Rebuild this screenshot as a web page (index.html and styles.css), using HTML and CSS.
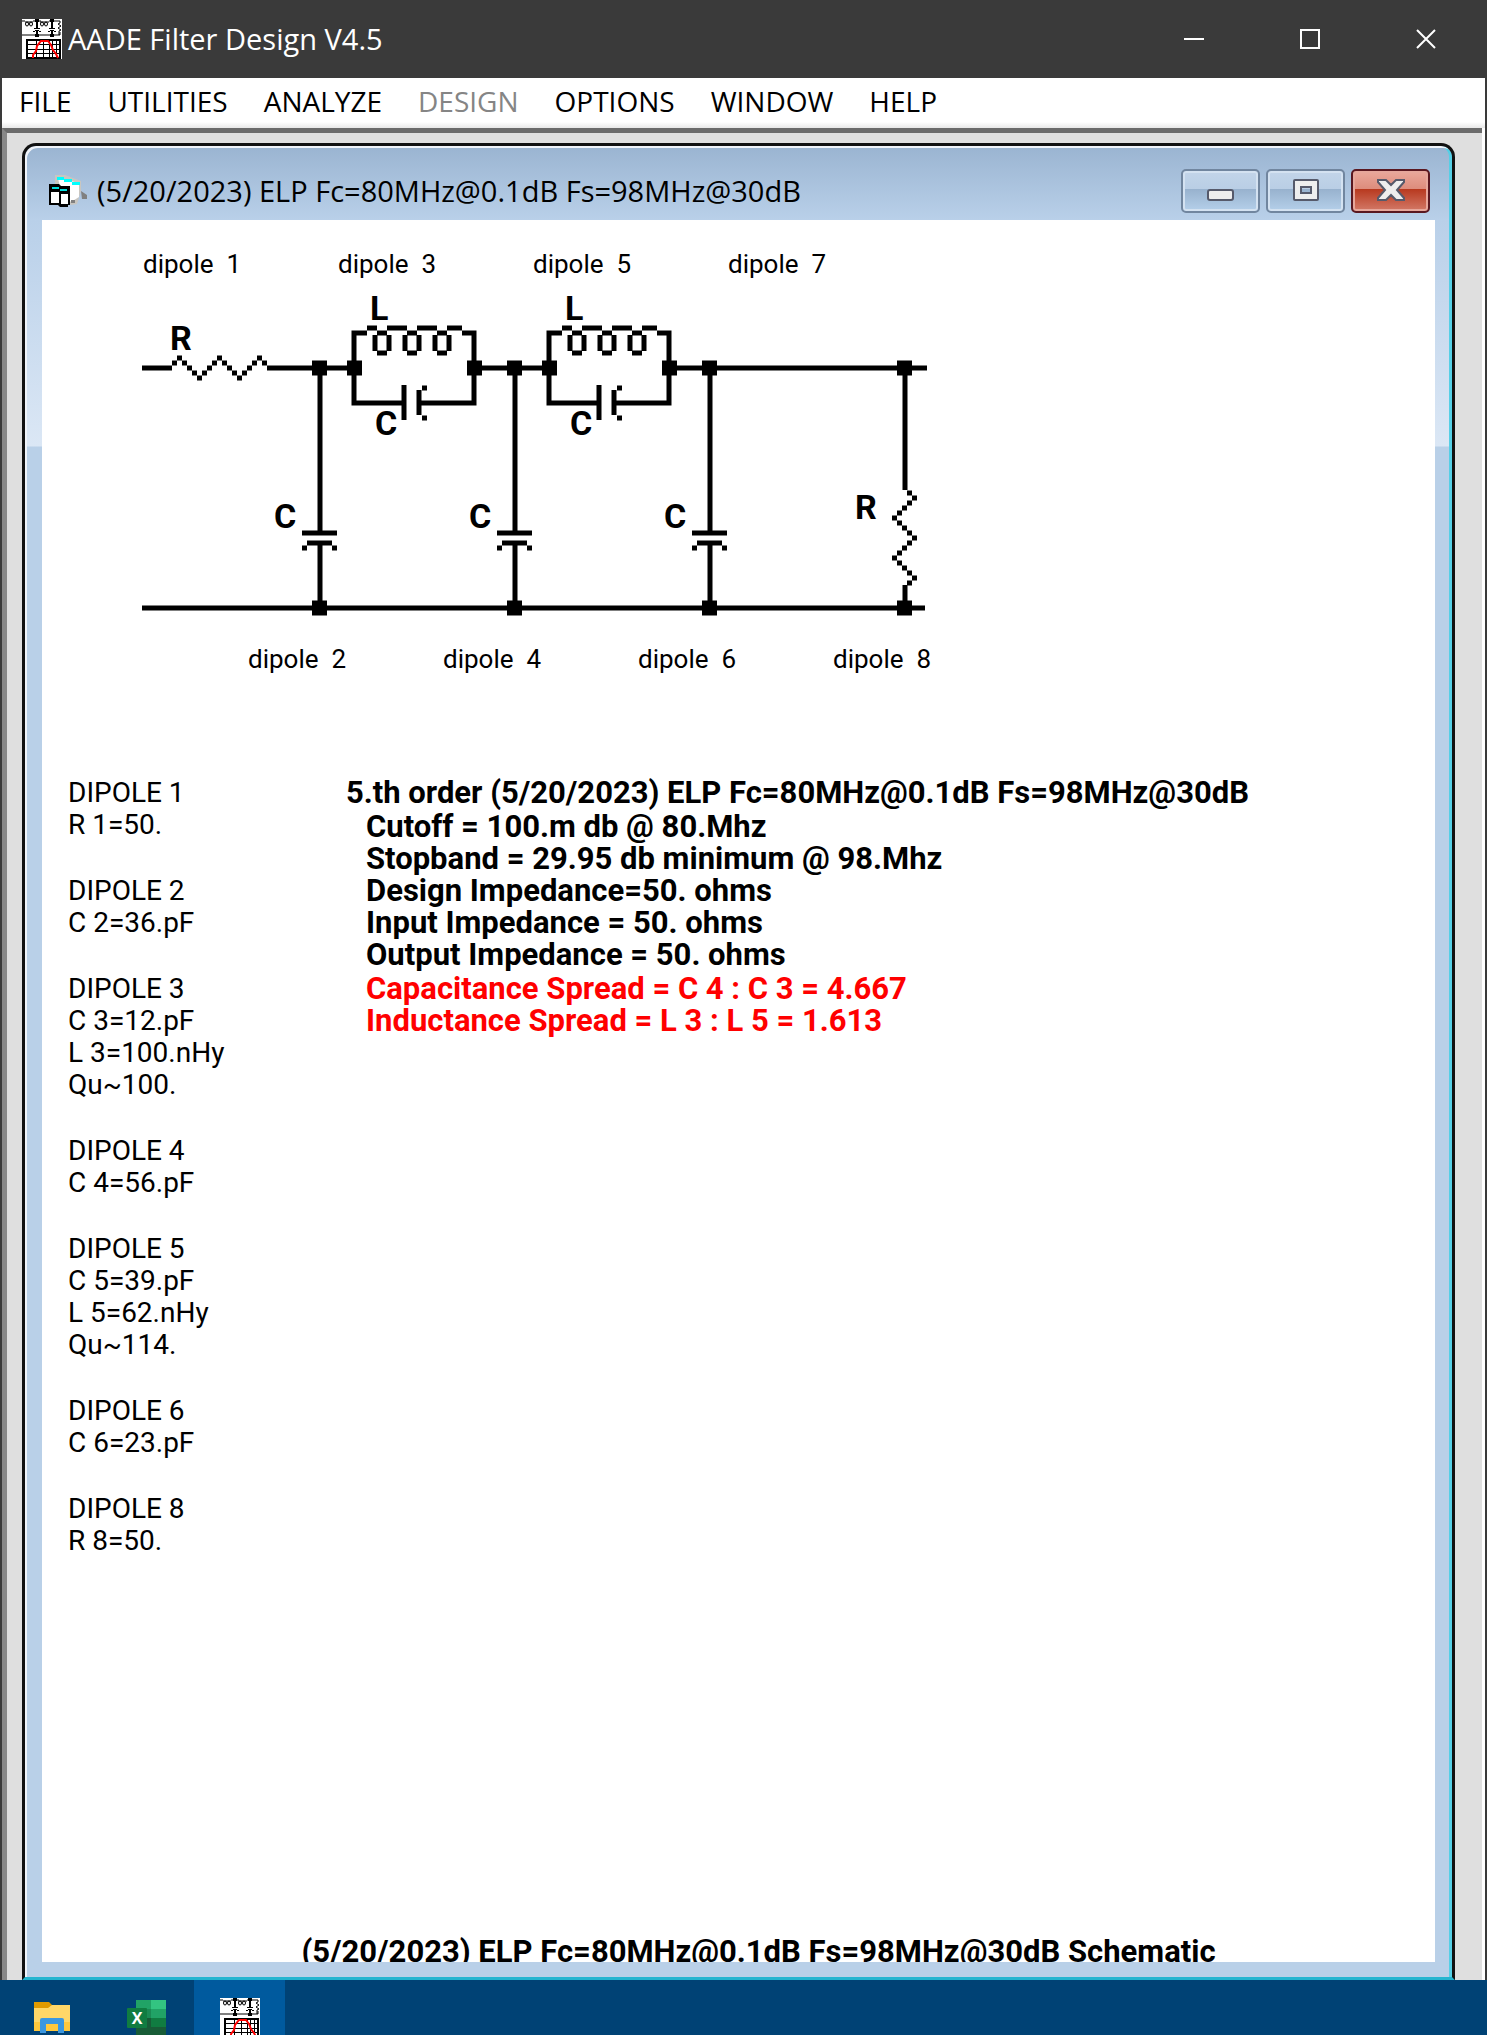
FILE: index.html
```html
<!DOCTYPE html>
<html lang="en">
<head>
<meta charset="utf-8">
<meta name="viewport" content="width=device-width, initial-scale=1">
<title>AADE Filter Design V4.5</title>
<link rel="stylesheet" href="styles.css">
</head>
<body>
<svg class="defs" aria-hidden="true">
  <symbol id="app-icon" viewBox="0 0 40 40">
    <path fill="#fff" d="M0 0h40v40H0z"/>
    <g fill="none" stroke="#000">
      <path d="M0 2h3M11 2h8M27 2h11v2l-2 1 3 2-3 2 3 2-2 1v4M0 16h38v-3M3 3h8M18 3h9"/>
      <ellipse cx="5" cy="5" rx="1.500" ry="2"/>
      <ellipse cx="9" cy="5" rx="1.500" ry="2"/>
      <ellipse cx="20" cy="5" rx="1.500" ry="2"/>
      <ellipse cx="24" cy="5" rx="1.500" ry="2"/>
    </g>
    <path fill="#000" d="M13 0h4v3h-4zM28 0h4v3h-4zM13 15h4v3h-4zM28 15h4v3h-4zM14 3h2v6h-2zM29 3h2v6h-2zM12 9h6v1h-6zM27 9h6v1h-6zM13 11h4v1h-4zM28 11h4v1h-4zM11 12h2v1h-2zM17 12h2v1h-2zM26 12h2v1h-2zM32 12h2v1h-2zM14 12h2v3h-2zM29 12h2v3h-2z"/>
    <path fill="none" stroke="#000" stroke-width="2" d="M5 21h33v18H5z"/>
    <path fill="none" stroke="#000" d="M5 25.500h33M5 30.500h33M5 34.500h33M14.500 21v18M21.500 21v18M27.500 21v18M30.500 21v18M34.500 21v18"/>
    <path fill="none" stroke="#f00" stroke-width="2" d="M11 39v-3l3-4 1-5 4-5h7l3 4 2 5 3 4 2 4"/>
  </symbol>
</svg>

<header class="titlebar">
  <svg class="app-icon" aria-hidden="true"><use href="#app-icon"/></svg>
  <h1 class="titlebar-text">AADE Filter Design V4.5</h1>
  <div class="window-controls">
    <button class="window-control" aria-label="Minimize"><svg viewBox="0 0 20 20"><path d="M0 10h20"/></svg></button>
    <button class="window-control" aria-label="Maximize"><svg viewBox="0 0 20 20"><path d="M1 1h18v18H1z"/></svg></button>
    <button class="window-control" aria-label="Close"><svg viewBox="0 0 20 20"><path d="M1 1l18 18M19 1L1 19"/></svg></button>
  </div>
</header>

<main class="frame">
  <nav class="menubar">
    <button class="menu">FILE</button>
    <button class="menu">UTILITIES</button>
    <button class="menu">ANALYZE</button>
    <button class="menu" disabled>DESIGN</button>
    <button class="menu">OPTIONS</button>
    <button class="menu">WINDOW</button>
    <button class="menu">HELP</button>
  </nav>

  <div class="workspace">
    <section class="child">
      <header class="child-bar">
        <svg class="child-icon" viewBox="0 0 38 32" aria-hidden="true">
          <path fill="#c9c6c0" d="M6 0h10l16 6v10l-4 13-6 1-16-18z"/>
          <path fill="#fff" d="M9 3l21 5v14l-8 5-10-10z"/>
          <path fill="#0ff" d="M8 2h7v3H8zM15 4h8v3h-8zM23 7h8v3h-8z"/>
          <path fill="#808080" d="M32 16l6 4v4h-5zM22 25h4v3h-4z"/>
          <path fill="#000" d="M0 9h10l2 2h9v19h-2v2h-8l-2-2H0z"/>
          <path fill="#0dd" d="M3 12h7v2H3zM11 14h7v2h-7z"/>
          <path fill="#fff" d="M2 17h8v11H2zM12 19h7v10h-7z"/>
        </svg>
        <h2 class="child-title">(5/20/2023) ELP Fc=80MHz@0.1dB Fs=98MHz@30dB</h2>
        <div class="child-controls">
          <button class="child-control" aria-label="Minimize"><svg viewBox="0 0 28 24"><rect x="1" y="11" width="25" height="10" rx="2"/></svg></button>
          <button class="child-control" aria-label="Maximize"><svg viewBox="0 0 28 24"><path fill-rule="evenodd" d="M3 1h22q1 0 1 1v18q0 1-1 1H3q-1 0-1-1V2q0-1 1-1zM9 8v6h10V8z"/></svg></button>
          <button class="child-control child-close" aria-label="Close"><svg viewBox="0 0 28 24"><path d="M1 1h8l5 5 5-5h8v2l-7 8 7 8v2h-8l-5-5-5 5H1v-2l7-8-7-8z"/></svg></button>
        </div>
      </header>

      <div class="document">
        <svg class="schematic" viewBox="42 220 950 480" role="img" aria-label="Filter schematic">
          <defs>
            <g id="tank">
              <path d="M367 333H354v70h50M372 328h-5M404 385v35M419 390v25M419 403h55v-70h-12M367 328h10M387 328h20M417 328h20M447 328h15M422 388h5M422 418h5"/>
              <path d="M377 333h10M375 335v16M389 335v16M377 353h10M407 333h10M405 335v16M419 335v16M407 353h10M437 333h10M435 335v16M449 335v16M437 353h10"/>
              <path class="node" d="M347 368h15M467 368h15"/>
              <text class="part" x="370" y="320">L</text>
              <text class="part" x="375" y="435">C</text>
            </g>
            <g id="shunt">
              <path d="M320 368v165M302 533h35M307 543h25M302 548h5M332 548h5M320 543v65"/>
              <path class="node" d="M312 368h15M312 608h15"/>
              <text class="part" x="274" y="528">C</text>
            </g>
          </defs>
          <g class="wires">
            <path d="M142 368h30M172 363h5m0-5h5m0 5h5m0 5h5m0 5h5m0 5h5m0-5h5m0-5h5m0-5h5m0-5h5m0 5h5m0 5h5m0 5h5m0 5h5m0-5h5m0-5h5m0-5h5m0-5h5m0 5h5"/>
            <path d="M267 368h87M474 368h76M670 368h257M142 608h783"/>
            <path d="M905 368v122M907 493h5m0 5h5m-10 5h5m-10 5h5m-10 5h5m-10 5h5m0 5h5m0 5h5m0 5h5m0 5h5m-10 5h5m-10 5h5m-10 5h5m-10 5h5m0 5h5m0 5h5m0 5h5m0 5h5m-10 5h5M905 585v23"/>
            <path class="node" d="M897 368h15M897 608h15"/>
            <use href="#tank"/>
            <use href="#tank" x="195"/>
            <use href="#shunt"/>
            <use href="#shunt" x="195"/>
            <use href="#shunt" x="390"/>
          </g>
          <text class="part" x="170" y="350">R</text>
          <text class="part" x="855" y="519">R</text>
          <g class="labels">
            <text x="143" y="273">dipole  1</text>
            <text x="338" y="273">dipole  3</text>
            <text x="533" y="273">dipole  5</text>
            <text x="728" y="273">dipole  7</text>
            <text x="248" y="668">dipole  2</text>
            <text x="443" y="668">dipole  4</text>
            <text x="638" y="668">dipole  6</text>
            <text x="833" y="668">dipole  8</text>
          </g>
        </svg>

        <div class="report">
          <div class="parts">
            <p>DIPOLE 1<br>R 1=50.</p>
            <p>DIPOLE 2<br>C 2=36.pF</p>
            <p>DIPOLE 3<br>C 3=12.pF<br>L 3=100.nHy<br>Qu~100.</p>
            <p>DIPOLE 4<br>C 4=56.pF</p>
            <p>DIPOLE 5<br>C 5=39.pF<br>L 5=62.nHy<br>Qu~114.</p>
            <p>DIPOLE 6<br>C 6=23.pF</p>
            <p>DIPOLE 8<br>R 8=50.</p>
          </div>
          <div class="summary">
            <p>5.th order (5/20/2023) ELP Fc=80MHz@0.1dB Fs=98MHz@30dB</p>
            <p class="detail">Cutoff = 100.m db @ 80.Mhz<br>Stopband = 29.95 db minimum @ 98.Mhz<br>Design Impedance=50. ohms<br>Input Impedance = 50. ohms<br>Output Impedance = 50. ohms</p>
            <p class="detail spread">Capacitance Spread = C 4 : C 3 = 4.667<br>Inductance Spread = L 3 : L 5 = 1.613</p>
          </div>
        </div>

        <p class="caption">(5/20/2023) ELP Fc=80MHz@0.1dB Fs=98MHz@30dB Schematic</p>
      </div>
    </section>
  </div>
</main>

<footer class="taskbar">
  <button class="task" aria-label="File Explorer">
    <svg class="task-icon" viewBox="0 0 40 40">
      <path fill="#e09a00" d="M2 4h15l3 3v4H2z"/>
      <path fill="#ffd768" d="M2 10h14l4-3h18v26H2z"/>
      <path fill="#ffc83d" d="M2 24h36v9H2z"/>
      <path fill="#3b97e0" d="M8 35V22q0-2 2-2h20q2 0 2 2v13h-6v-9H14v9z"/>
    </svg>
  </button>
  <button class="task" aria-label="Excel">
    <svg class="task-icon" viewBox="0 0 40 40">
      <path fill="#21a366" d="M10 2h15v9H10zM25 11h15v9H25z"/>
      <path fill="#33c481" d="M25 2h15v9H25z"/>
      <path fill="#1b8a54" d="M10 11h15v9H10z"/>
      <path fill="#107c41" d="M25 20h15v9H25z"/>
      <path fill="#185c37" d="M10 20h15v9h15v9H10z"/>
      <rect fill="#107c41" x="1" y="10" width="20" height="20" rx="1"/>
      <text class="excel-x" x="11" y="26">X</text>
    </svg>
  </button>
  <button class="task task-active" aria-label="AADE Filter Design">
    <svg class="task-icon"><use href="#app-icon"/></svg>
  </button>
</footer>
</body>
</html>
```
FILE: styles.css
```css
* { box-sizing: border-box; }

body {
  margin: 0;
  height: 100vh;
  display: flex;
  flex-direction: column;
  overflow: hidden;
  background: #3a3a3a;
  color: #000;
  font-family: "Open Sans", "Noto Sans", sans-serif;
}

h1, h2, p { margin: 0; font-weight: 400; }

button {
  padding: 0;
  border: 0;
  background: none;
  color: inherit;
  font: inherit;
}

.defs { position: absolute; width: 0; height: 0; }

/* Main window */
.titlebar {
  flex: none;
  display: flex;
  align-items: center;
  height: 78px;
  padding: 0 3px 0 22px;
  gap: 6px;
  background: #3a3a3a;
  color: #fff;
}

.app-icon { width: 40px; height: 40px; }
.titlebar-text { font-size: 29px; line-height: 42px; }
.window-controls { display: flex; margin-left: auto; }

.window-control {
  display: flex;
  align-items: center;
  justify-content: center;
  width: 116px;
  height: 76px;
}

.window-control svg { width: 20px; height: 20px; }
.window-control path { fill: none; stroke: #fff; stroke-width: 2; }

.frame {
  flex: 1;
  min-height: 0;
  display: flex;
  flex-direction: column;
  margin: 0 2px;
  background: #fff;
}

.menubar {
  display: flex;
  gap: 36px;
  height: 50px;
  padding: 3px 17px 7px;
  background: linear-gradient(#fff 44px, #e8e8e8);
}

.menu { font-size: 28px; line-height: 40px; }
.menu:disabled { color: #858585; }

.workspace {
  flex: 1;
  min-height: 0;
  display: flex;
  margin-right: 3px;
  padding: 10px 27px 0 15px;
  border-top: 5px solid #6b6b6b;
  border-left: 5px solid #888;
  background: #dfdfdf;
}

/* Schematic window */
.child {
  flex: 1;
  min-width: 0;
  display: flex;
  flex-direction: column;
  padding: 0 17px 15px;
  border: 3px solid #111;
  border-bottom: 3px solid #25b5d0;
  border-radius: 14px 14px 0 0;
  box-shadow: inset 2px 2px #f0f4fa, inset -3px 0 #55cfe6;
  background:
    linear-gradient(#9ab4d1, #b9d0e9 74px, #dbe7f5 300px, #b9d0e8 301px);
}

.child-bar {
  flex: none;
  display: flex;
  align-items: center;
  height: 74px;
  padding: 16px 5px 0 7px;
  gap: 10px;
}

.child-icon { flex: none; width: 38px; height: 32px; }
.child-title { font-size: 29px; line-height: 40px; white-space: nowrap; }
.child-controls { display: flex; gap: 6px; margin-left: auto; }

.child-control {
  display: flex;
  align-items: center;
  justify-content: center;
  width: 79px;
  height: 44px;
  border: 2px solid #71869f;
  border-radius: 5px;
  box-shadow: inset 0 0 0 2px #d4e2f1;
  background: linear-gradient(#c3d5e9, #b9cee5 45%, #98b2ce 46%, #b5d0ea);
}

.child-control svg { width: 28px; height: 24px; }
.child-control rect,
.child-control path { fill: #eee; stroke: #565a6b; stroke-width: 2; }

.child-close {
  border-color: #5a1820;
  box-shadow: inset 0 0 0 2px #e6a79b;
  background: linear-gradient(#eaa99c, #dd8c7c 45%, #b83a20 46%, #d37a68);
}

.document {
  flex: 1;
  min-height: 0;
  display: flex;
  flex-direction: column;
  overflow: hidden;
  background: #fff;
  font-family: Roboto, "Liberation Sans", sans-serif;
  font-size: 28px;
  line-height: 32px;
}

.schematic { flex: none; display: block; width: 950px; max-width: 100%; }
.wires { fill: none; stroke: #000; stroke-width: 5; }
.node { stroke-width: 15; }
.part { fill: #000; stroke: none; font-size: 34px; font-weight: 700; }
.labels { fill: #000; font-size: 26px; }
.labels text { white-space: pre; }

.report { display: flex; padding: 77px 26px 0; }
.parts { display: flex; flex-direction: column; gap: 34px; width: 278px; }
.summary { display: flex; flex-direction: column; gap: 2px; }
.summary p { font-size: 31px; font-weight: 700; }
.summary .detail { padding-left: 20px; }
.summary .spread { color: #f00; }

.caption {
  flex: none;
  height: 26px;
  margin-top: auto;
  padding-left: 40px;
  overflow: hidden;
  font-size: 31px;
  font-weight: 700;
  text-align: center;
  white-space: nowrap;
}

/* Taskbar */
.taskbar {
  flex: none;
  display: flex;
  gap: 3px;
  height: 55px;
  padding-left: 6px;
  overflow: hidden;
  background: #004275;
}

.task {
  display: flex;
  justify-content: center;
  width: 91px;
  padding-top: 18px;
}

.task-active { background: #005a9e; }
.task-icon { flex: none; width: 40px; height: 40px; }
.excel-x { fill: #fff; font: 700 16px "Open Sans", sans-serif; text-anchor: middle; }
```
